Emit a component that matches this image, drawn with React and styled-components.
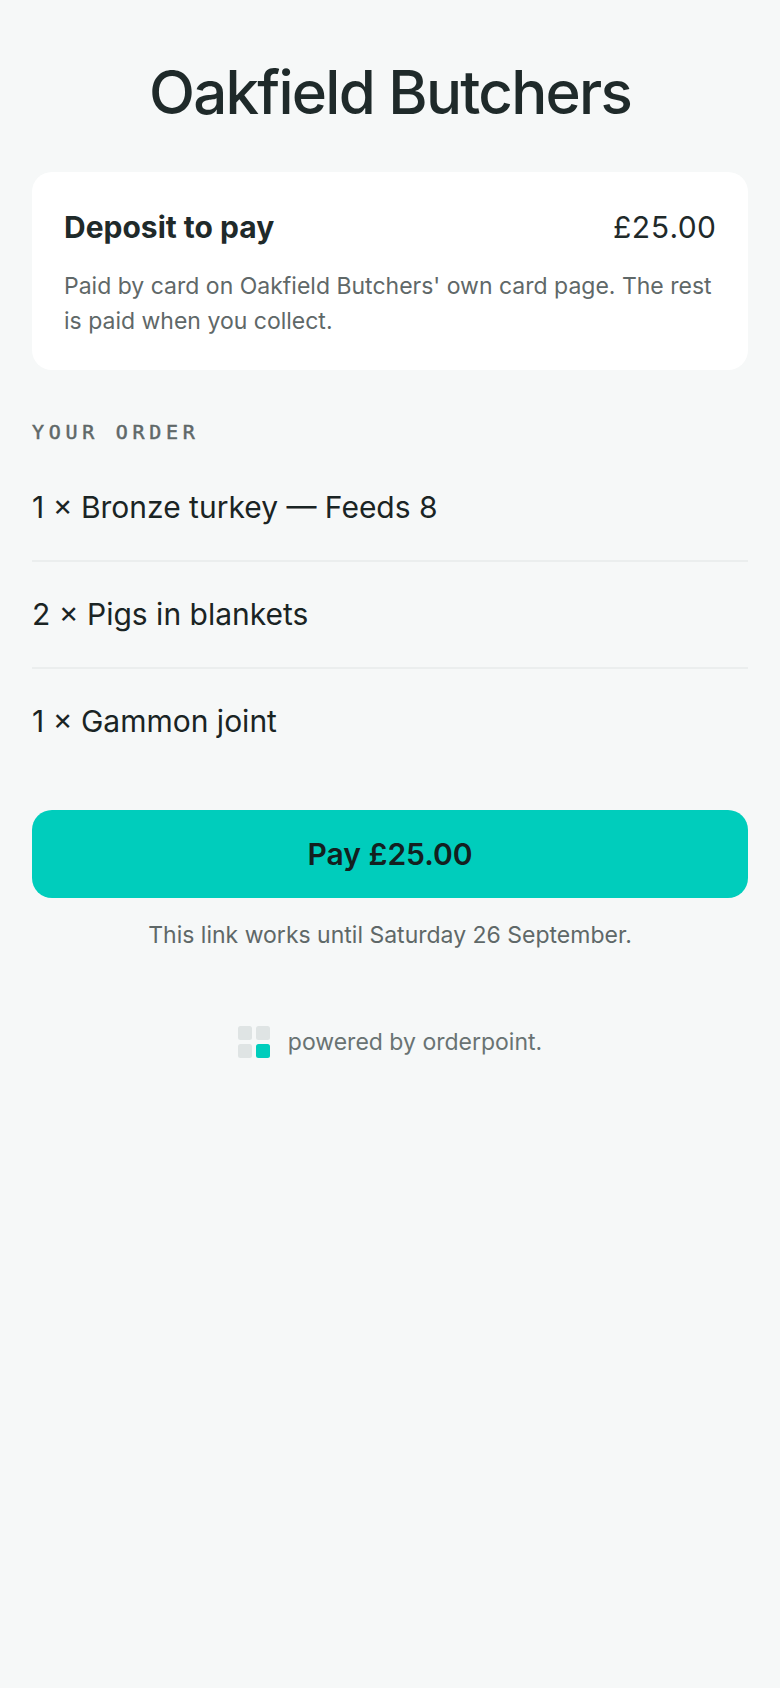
import React from "react";
import styled, { createGlobalStyle } from "styled-components";

const Global = createGlobalStyle`
  html, body { margin: 0; padding: 0; background: #f6f8f8; }
  body { font-family: Inter, "Liberation Sans", sans-serif; }
`;
const Page = styled.main`
  min-height: 1688px;
  box-sizing: border-box;
  padding: 56px 32px 32px;
  background: #f6f8f8;
  color: #1f2a2a;
`;
const Title = styled.h1`
  margin: 0 0 44px;
  font-size: 60px;
  line-height: 72px;
  font-weight: 500;
  letter-spacing: -1.75px;
  text-align: center;
  color: #1f2a2a;
`;
const Card = styled.section`
  background: #fff;
  border-radius: 20px;
  padding: 32px 32px 31px;
  margin-bottom: 50px;
`;
const CardRow = styled.div`
  display: flex;
  justify-content: space-between;
  align-items: baseline;
  margin-bottom: 19px;
  font-size: 30px;
  line-height: 46px;
`;
const CardLabel = styled.strong`
  font-weight: 700;
`;
const Amount = styled.span`
  font-variant-numeric: tabular-nums;
  letter-spacing: -0.2px;
`;
const Note = styled.p`
  margin: 0;
  font-size: 23px;
  line-height: 35px;
  color: #5f6868;
`;
const SectionLabel = styled.h2`
  margin: 0 0 11px;
  font-family: "DejaVu Sans Mono", monospace;
  font-size: 20px;
  line-height: 24px;
  font-weight: 400;
  letter-spacing: 4.7px;
  color: #5f6868;
  -webkit-text-stroke: 0.5px #5f6868;
`;
const Items = styled.ul`
  list-style: none;
  margin: 0 0 36px;
  padding: 0;
`;
const Item = styled.li`
  padding: 34px 0 35px;
  font-size: 30px;
  line-height: 36px;
  color: #1a2424;
  & + & { border-top: 2px solid #ebeeee; }
`;
const PayButton = styled.button`
  display: block;
  width: 100%;
  height: 88px;
  border: 0;
  border-radius: 20px;
  background: #00cdbc;
  color: #132020;
  font: 600 30px Inter, sans-serif;
`;
const Expiry = styled.p`
  margin: 21px 0 0;
  font-size: 23px;
  line-height: 32px;
  color: #5f6868;
  text-align: center;
`;
const Brand = styled.footer`
  display: flex;
  justify-content: center;
  align-items: center;
  gap: 18px;
  margin-top: 75px;
  font-size: 23px;
  line-height: 32px;
  color: #697373;
`;
const LogoMark = () => (
  <svg width="32" height="32" viewBox="0 0 32 32" aria-hidden="true">
    <rect x="0" y="0" width="14" height="14" rx="2.5" fill="#dfe4e4" />
    <rect x="18" y="0" width="14" height="14" rx="2.5" fill="#dfe4e4" />
    <rect x="0" y="18" width="14" height="14" rx="2.5" fill="#dfe4e4" />
    <rect x="18" y="18" width="14" height="14" rx="2.5" fill="#00cdbc" />
  </svg>
);

export default function App() {
  return (
    <Page>
      <Global />
      <Title>Oakfield Butchers</Title>
      <Card>
        <CardRow>
          <CardLabel>Deposit to pay</CardLabel>
          <Amount>£25.00</Amount>
        </CardRow>
        <Note>Paid by card on Oakfield Butchers' own card page. The rest is paid when you collect.</Note>
      </Card>
      <SectionLabel>YOUR ORDER</SectionLabel>
      <Items>
        <Item>1 × Bronze turkey — Feeds 8</Item>
        <Item>2 × Pigs in blankets</Item>
        <Item>1 × Gammon joint</Item>
      </Items>
      <PayButton>Pay £25.00</PayButton>
      <Expiry>This link works until Saturday 26 September.</Expiry>
      <Brand>
        <LogoMark />
        <span>powered by orderpoint.</span>
      </Brand>
    </Page>
  );
}
